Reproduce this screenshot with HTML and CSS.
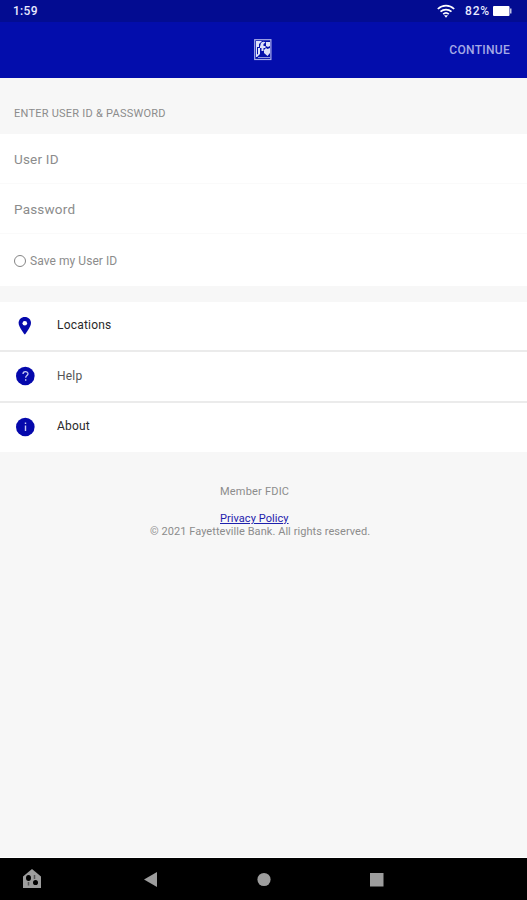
FILE: index.html
```
<!DOCTYPE html>
<html lang="en">
   <head>
      <meta charset="UTF-8">
      <meta name="viewport" content="width=device-width, initial-scale=1.0"/>
      <title>Fayetteville Bank</title>
      <link rel="stylesheet" href="styles.css">
   </head>
   <body>
      <div class="status-bar">
         <span class="time">1:59</span>
         <svg class="wifi" width="18" height="14" viewBox="0 0 18 14" fill="none" stroke="#fff" stroke-width="1.7">
            <path d="M.8 5C5.5.6 12.5.6 17.2 5M3.5 7.7c3.2-2.9 7.8-2.9 11 0M6.2 10.2c1.6-1.5 4-1.5 5.6 0"/>
            <path d="M7 11.3h4L9 13.8z" fill="#fff" stroke="none"/>
         </svg>
         <span class="charge">82%</span>
         <svg class="battery" width="20" height="11" viewBox="0 0 20 11" fill="#fff">
            <rect width="16.5" height="10" rx="1"/>
            <rect x="17" y="2.5" width="1.5" height="5" opacity=".75"/>
         </svg>
      </div>

      <header class="header">
         <svg class="logo" width="18" height="22" viewBox="0 0 18 22">
            <rect x=".7" y=".7" width="16.2" height="19.8" fill="#0611aa" stroke="#a9ade8" stroke-width="1.2"/>
            <path d="M2 2h6L5 5v3H3v9H2z" fill="#dfe1fa"/>
            <path d="M4 9h2v6l-3 3H2v-2l2-1z" fill="#dfe1fa"/>
            <path d="M6.5 6c0-3 3.5-4 5-2.5L9.5 5v2h2v2h-2v3h-2V9H6V7.5zM12 3h4v4l-2 1-2-1zM10 11l2-2 1.5 1L16 9v5l-2.5 3L10 14z" fill="#dfe1fa"/>
            <path d="M4 18.5h12" stroke="#8f95dc"/>
         </svg>
         <button class="continue" type="submit" form="login">CONTINUE</button>
      </header>

      <h1 class="section-title">ENTER USER ID &amp; PASSWORD</h1>

      <form id="login" class="login" action="">
         <input class="field" type="text" name="user" placeholder="User ID" aria-label="User ID" />
         <input class="field" type="password" name="password" placeholder="Password" aria-label="Password" />
         <label class="save">
            <input class="save-check" type="checkbox" name="save" />
            <span>Save my User ID</span>
         </label>
      </form>

      <nav class="menu">
         <a class="menu-item" href="#">
            <svg width="20" height="20" viewBox="0 0 20 20">
               <path d="M9.8 1C6.2 1 3.6 3.6 3.6 7c0 4.2 6.2 11.6 6.2 11.6S16 11.2 16 7c0-3.4-2.6-6-6.2-6z" fill="#0508ac"/>
               <circle cx="9.8" cy="7.2" r="2.3" fill="#fff"/>
            </svg>
            <span>Locations</span>
         </a>
         <a class="menu-item help" href="#">
            <svg width="20" height="20" viewBox="0 0 20 20">
               <circle cx="10.3" cy="10" r="9.3" fill="#0508ac"/>
               <path d="M8 8c0-3 5-3 5-.2 0 1.8-2.3 1.8-2.3 4" fill="none" stroke="#c9caf3" stroke-width="1.3"/>
               <rect x="10" y="13.2" width="1.4" height="1.5" fill="#c9caf3"/>
            </svg>
            <span>Help</span>
         </a>
         <a class="menu-item about" href="#">
            <svg width="20" height="20" viewBox="0 0 20 20">
               <circle cx="10.3" cy="10" r="9.3" fill="#0508ac"/>
               <path d="M10.5 5.5V7M10.5 8.5V14" stroke="#c9caf3" stroke-width="1.4"/>
            </svg>
            <span>About</span>
         </a>
      </nav>

      <footer class="footer">
         <p class="member">Member FDIC</p>
         <a class="privacy" href="#">Privacy Policy</a>
         <p class="copyright">© 2021 Fayetteville Bank. All rights reserved.</p>
      </footer>

      <div class="nav-bar">
         <svg width="527" height="42" viewBox="0 0 527 42" fill="#9d9d9d">
            <path d="M32 11l9 7.5V30H23V18.5z"/>
            <ellipse cx="28.5" cy="20" rx="2.5" ry="3" fill="#000"/>
            <ellipse cx="35.5" cy="24.5" rx="2.5" ry="2.6" fill="#000"/>
            <path d="M28.5 24v3.5M34.5 17v4" stroke="#555" stroke-width="1.5"/>
            <path d="M144 21.5l13-7.5v15z"/>
            <circle cx="264" cy="21.5" r="6.6"/>
            <rect x="370" y="15" width="13.5" height="13.5"/>
         </svg>
      </div>
   </body>
</html>
```
FILE: styles.css
```
*
{
   box-sizing: border-box;
}

body
{
   display: flex;
   flex-direction: column;
   height: 900px;
   margin: 0;
   background: #f7f7f7;
   color: #8c8c8c;
   font-family: Roboto, "Liberation Sans", sans-serif;
   overflow: hidden;
}

.status-bar
{
   display: flex;
   align-items: center;
   flex: none;
   height: 22px;
   padding: 0 13px;
   background: #030c91;
   color: #e9eaff;
   font-size: 12px;
   font-weight: 500;
}

.time
{
   margin-right: auto;
   letter-spacing: 0.3px;
}

.charge
{
   margin: 0 3px 0 9px;
   letter-spacing: 0.8px;
}

.battery
{
   margin-right: 1px;
}

.header
{
   display: grid;
   grid-template-columns: 1fr 18px 1fr;
   align-items: center;
   flex: none;
   height: 56px;
   padding: 0 17px 0 15px;
   background: #030dac;
}

.logo
{
   grid-column: 2;
}

.continue
{
   justify-self: end;
   padding: 0;
   border: 0;
   background: none;
   color: #a5a9e6;
   font: 500 12px Roboto, "Liberation Sans", sans-serif;
   letter-spacing: 0.3px;
}

.section-title
{
   flex: none;
   height: 56px;
   margin: 0;
   padding: 28px 14px 0;
   font-size: 11px;
   font-weight: 400;
   letter-spacing: 0.24px;
   line-height: 16px;
}

.login
{
   display: flex;
   flex-direction: column;
   flex: none;
   height: 152px;
   margin-bottom: 16px;
   background: #fff;
}

.field
{
   height: 50px;
   padding: 0 14px;
   border: 0;
   border-bottom: 1px solid #fafafa;
   background: none;
   font: 13.5px Roboto, "Liberation Sans", sans-serif;
   letter-spacing: 0.2px;
   outline: 0;
}

.field::placeholder
{
   color: #8c8c8c;
   opacity: 1;
}

.save
{
   display: flex;
   align-items: center;
   gap: 4px;
   height: 52px;
   padding: 2px 14px 0;
   font-size: 12px;
   letter-spacing: 0.06px;
}

.save-check
{
   width: 12px;
   height: 12px;
   margin: 0;
   border: 1px solid #858585;
   border-radius: 50%;
   appearance: none;
}

.menu
{
   flex: none;
   height: 150px;
   background: #fff;
}

.menu-item
{
   display: flex;
   align-items: center;
   gap: 22px;
   height: 50px;
   padding: 0 15px;
   border-bottom: 2px solid #ebebeb;
   color: #292929;
   font-size: 12px;
   letter-spacing: 0.2px;
   text-decoration: none;
}

.menu-item span
{
   padding-bottom: 2px;
}

.help
{
   height: 51px;
   padding-bottom: 1px;
   color: #555;
}

.help span
{
   padding-bottom: 1px;
}

.about
{
   height: 49px;
   padding-bottom: 1px;
   border-bottom: 0;
}

.about span
{
   padding-bottom: 3px;
}

.footer
{
   flex: 1;
   padding-top: 33px;
   border-bottom: 1px solid #fff;
   font-size: 11px;
   letter-spacing: 0.06px;
   line-height: 13px;
}

.member
{
   margin: 0 0 14px 220px;
   letter-spacing: 0.2px;
}

.privacy
{
   display: block;
   width: fit-content;
   margin-left: 220px;
   color: #1d20ac;
}

.copyright
{
   margin: 0 0 0 150px;
}

.nav-bar
{
   flex: none;
   height: 42px;
   background: #000;
}

.wifi
{
   margin-right: 1px;
}
```
